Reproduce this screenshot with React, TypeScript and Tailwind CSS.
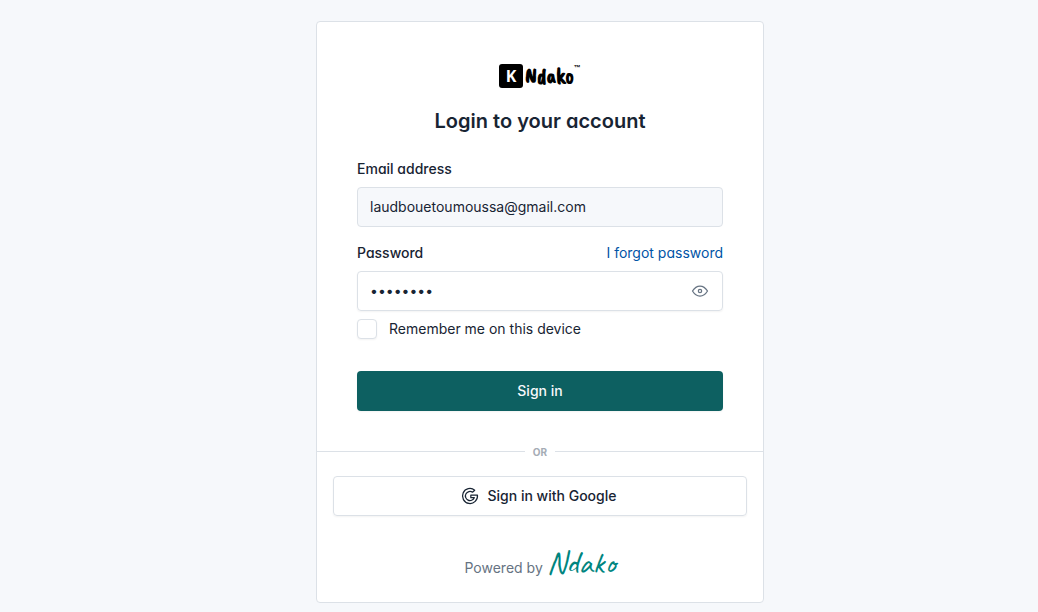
import { useState } from "react";

function EyeIcon() {
  return (
    <svg className="size-5" viewBox="0 0 24 24" fill="none" stroke="currentColor" strokeWidth="1.5" strokeLinecap="round" strokeLinejoin="round" aria-hidden="true">
      <path d="M10 12a2 2 0 1 0 4 0a2 2 0 0 0 -4 0" />
      <path d="M21 12c-2.4 4 -5.4 6 -9 6c-3.6 0 -6.6 -2 -9 -6c2.4 -4 5.4 -6 9 -6c3.6 0 6.6 2 9 6" />
    </svg>
  );
}

function GoogleIcon() {
  return (
    <svg className="-ml-1 size-5" viewBox="0 0 24 24" fill="none" stroke="currentColor" strokeWidth="1.5" strokeLinecap="round" strokeLinejoin="round" aria-hidden="true">
      <path d="M20.945 11a9 9 0 1 1 -3.284 -5.997l-2.655 2.392a5.5 5.5 0 1 0 2.119 6.605h-4.125v-3h7.945z" />
    </svg>
  );
}

function Brand() {
  return (
    <a href="#" className="flex h-7 items-center justify-center gap-0.5 text-black">
      <span className="flex size-6 items-center justify-center rounded-[3px] bg-black font-['Open_Sans',sans-serif] text-base font-bold text-white">K</span>
      <span className="flex items-start">
        <span className="font-['Caveat_Brush','Caveat','Lato',sans-serif] text-[22px] leading-6 font-bold">Ndako</span>
        <span className="font-['Liberation_Sans',sans-serif] text-[7px] leading-2 font-bold">™</span>
      </span>
    </a>
  );
}

export default function App() {
  const [email, setEmail] = useState("laudbouetoumoussa@gmail.com");
  const [password, setPassword] = useState("password");
  const [visible, setVisible] = useState(false);

  return (
    <div className="min-h-screen bg-[#f6f8fb] pt-[21px] pr-4 pb-2 pl-[58px] font-['Inter',sans-serif] text-sm text-[#182433] [font-feature-settings:'cv03','cv04','cv11']">
      <main className="mx-auto max-w-md rounded border border-[#dce1e7] bg-white">
        <form className="p-10" onSubmit={(e) => e.preventDefault()}>
          <Brand />
          <h1 className="mt-[17px] mb-6 text-center text-xl leading-7 font-semibold">Login to your account</h1>

          <label htmlFor="email" className="block font-medium">Email address</label>
          <input
            id="email"
            type="email"
            value={email}
            onChange={(e) => setEmail(e.target.value)}
            className="mt-2 block h-10 w-full rounded border border-[#dce1e7] bg-[#f6f8fb] px-3 pb-0.5 [font-feature-settings:normal]"
          />

          <div className="mt-4 flex items-center justify-between">
            <label htmlFor="password" className="font-medium">Password</label>
            <a href="#" className="text-[#0054a6]">I forgot password</a>
          </div>
          <div className="mt-2 flex h-10 items-center rounded border border-[#dce1e7] shadow-xs">
            <input
              id="password"
              type={visible ? "text" : "password"}
              value={password}
              onChange={(e) => setPassword(e.target.value)}
              className="h-full min-w-0 flex-1 px-3 pb-0.5 outline-none"
            />
            <button type="button" aria-label="Show password" onClick={() => setVisible(!visible)} className="mr-3 text-[#667382]">
              <EyeIcon />
            </button>
          </div>

          <label className="mt-2 flex items-center gap-3">
            <input type="checkbox" className="size-5 appearance-none rounded border border-[#dce1e7] bg-white shadow-xs checked:bg-[#0d6061]" />
            Remember me on this device
          </label>

          <button type="submit" className="mt-8 block h-10 w-full rounded bg-[#0d6061] font-medium text-[#f6f8fb] shadow-xs">Sign in</button>
        </form>

        <div className="flex h-px items-center gap-2 text-[10px] font-bold text-[#a5acb5]">
          <span className="h-px flex-1 bg-[#dce1e7]" />
          <span className="pt-0.5">OR</span>
          <span className="h-px flex-1 bg-[#dce1e7]" />
        </div>

        <div className="px-4 pt-6 pb-5">
          <button type="button" className="flex h-10 w-full items-center justify-center gap-2 rounded border border-[#dce1e7] font-medium shadow-xs">
            <GoogleIcon />
            Sign in with Google
          </button>
          <p className="mt-7 flex items-baseline justify-center gap-1 text-[#667382]">
            Powered by
            <a href="#" className="font-['Caveat','Lato',sans-serif] text-[32px] leading-[38px] text-[#00857f]">Ndako</a>
          </p>
        </div>
      </main>
    </div>
  );
}
